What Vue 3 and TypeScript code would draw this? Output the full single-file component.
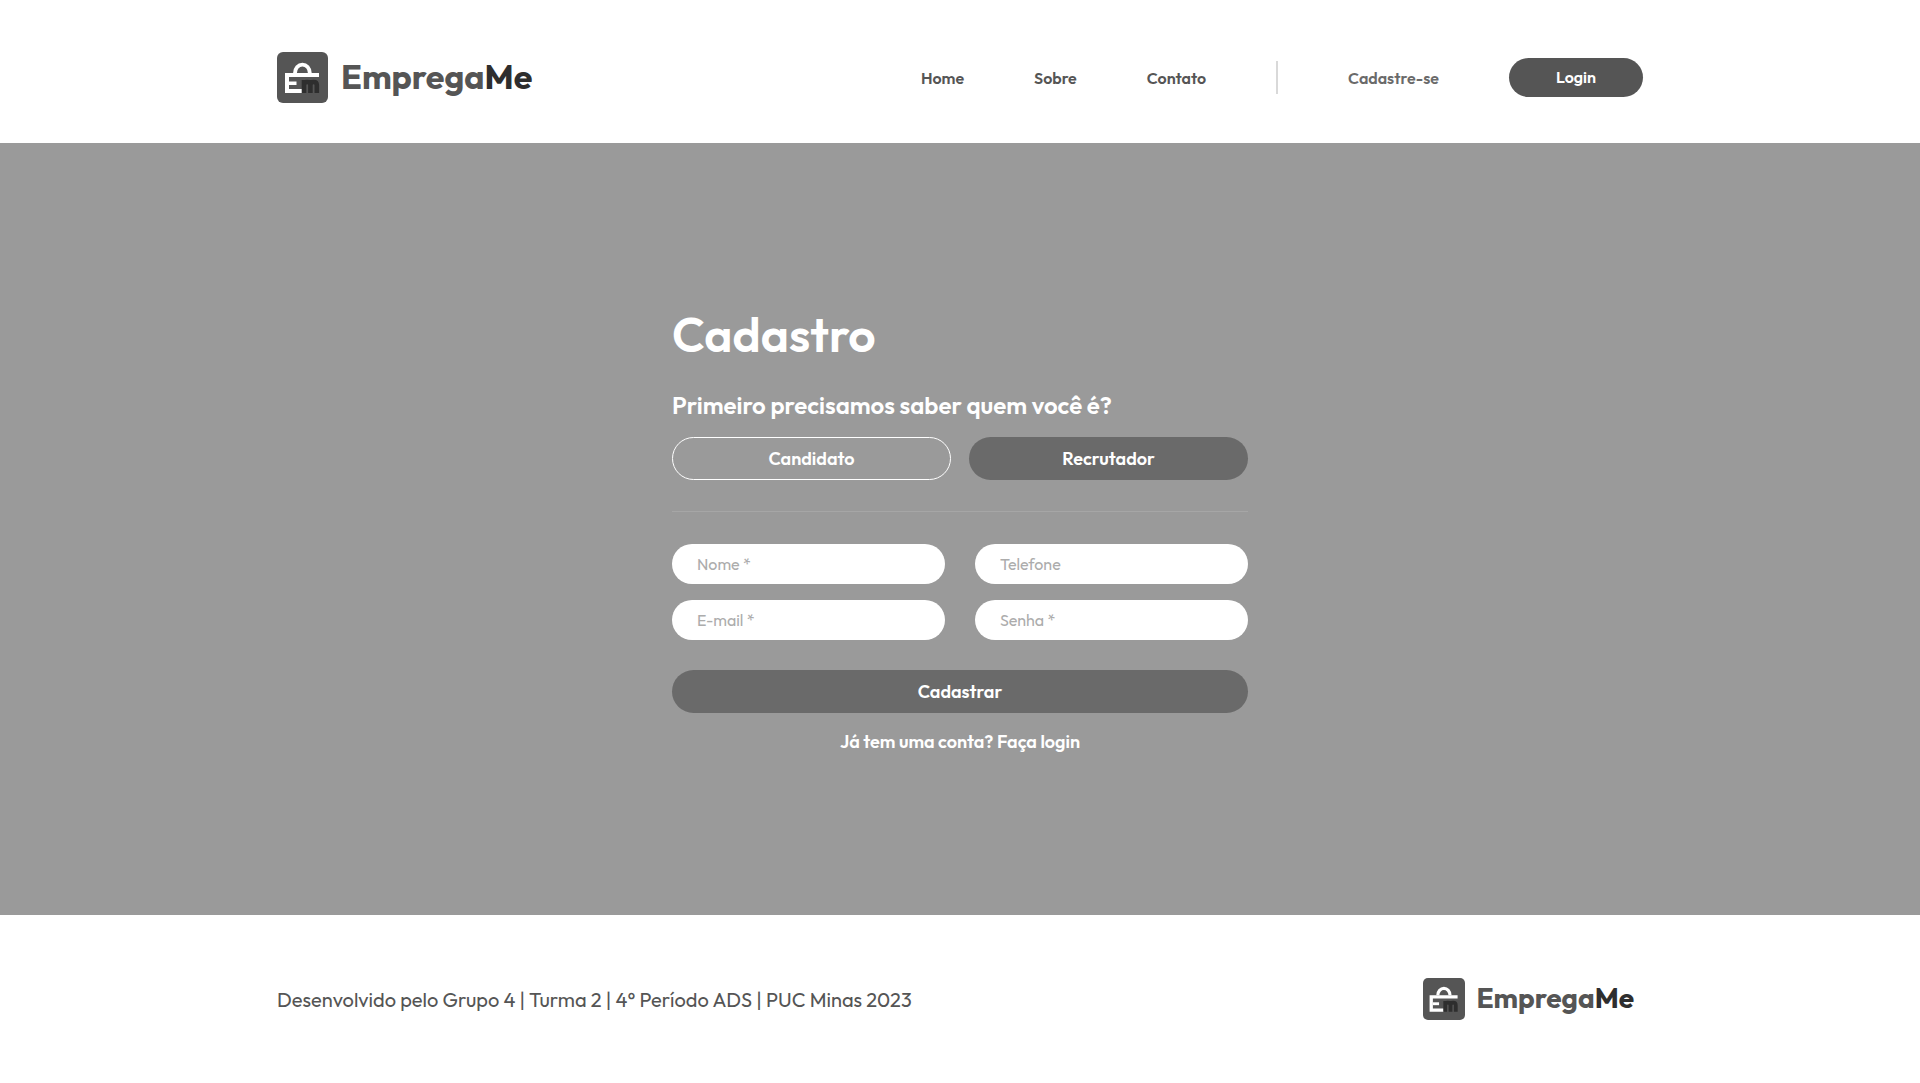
<script setup lang="ts">
import { ref } from 'vue'

type Role = 'candidato' | 'recrutador'

interface Field {
  id: string
  type: string
  placeholder: string
  label: string
}

const navLinks: string[] = ['Home', 'Sobre', 'Contato']

const fields: Field[] = [
  { id: 'nome', type: 'text', placeholder: 'Nome *', label: 'Nome' },
  { id: 'telefone', type: 'tel', placeholder: 'Telefone', label: 'Telefone' },
  { id: 'email', type: 'email', placeholder: 'E-mail *', label: 'E-mail' },
  { id: 'senha', type: 'password', placeholder: 'Senha *', label: 'Senha' },
]

const roles: { id: Role; label: string }[] = [
  { id: 'candidato', label: 'Candidato' },
  { id: 'recrutador', label: 'Recrutador' },
]

const selected = ref<Role>('candidato')
const values = ref<Record<string, string>>({ nome: '', telefone: '', email: '', senha: '' })
</script>

<template>
  <div class="page">
    <header class="header">
      <div class="container">
        <a href="#" class="logo">
          <svg class="mark" viewBox="0 0 51 51" aria-hidden="true">
            <symbol id="brand-mark" viewBox="0 0 51 51">
              <rect width="51" height="51" rx="6" fill="#555" />
              <path d="M18 21a7.4 8.4 0 0 1 14.8 0" fill="none" stroke="#fff" stroke-width="3.8" />
              <path d="M8 21h34v4H12v12h13v4H8z" fill="#fff" />
              <path d="M12 29.5h7.500v3.500H12z" fill="#fff" />
              <path d="M27 41V28M27 33q0-3 3.200-3t3.200 3v8M33.400 33q0-3 3.200-3t3.200 3v8" fill="none" stroke="#2e2e2e" stroke-width="4.6" />
            </symbol>
            <use href="#brand-mark" />
          </svg>
          <span class="word">Emprega<span class="me">Me</span></span>
        </a>
        <nav class="nav">
          <a v-for="link in navLinks" :key="link" href="#">{{ link }}</a>
          <span class="divider"></span>
          <a href="#" class="signup">Cadastre-se</a>
          <button type="button" class="login">Login</button>
        </nav>
      </div>
    </header>

    <main class="main">
      <form class="form" @submit.prevent>
        <h1>Cadastro</h1>
        <h2>Primeiro precisamos saber quem você é?</h2>
        <div class="roles">
          <button
            v-for="role in roles"
            :key="role.id"
            type="button"
            class="pill"
            :class="{ outline: selected === role.id }"
            :aria-pressed="selected === role.id"
            @click="selected = role.id"
          >
            {{ role.label }}
          </button>
        </div>
        <hr />
        <div class="fields">
          <input
            v-for="field in fields"
            :id="field.id"
            :key="field.id"
            v-model="values[field.id]"
            :type="field.type"
            :placeholder="field.placeholder"
            :aria-label="field.label"
          />
        </div>
        <button type="submit" class="pill submit">Cadastrar</button>
        <a href="#" class="have-account">Já tem uma conta? Faça login</a>
      </form>
    </main>

    <footer class="footer">
      <div class="container">
        <p>Desenvolvido pelo Grupo 4 | Turma 2 | 4° Período ADS | PUC Minas 2023</p>
        <a href="#" class="logo small">
          <svg class="mark" viewBox="0 0 51 51" aria-hidden="true">
            <use href="#brand-mark" />
          </svg>
          <span class="word">Emprega<span class="me">Me</span></span>
        </a>
      </div>
    </footer>
  </div>
</template>

<style>
body {
  margin: 0;
}
</style>

<style scoped>
.page {
  display: flex;
  flex-direction: column;
  min-height: 100vh;
  background: #fff;
  color: #555;
  font-family: Outfit, Lato, sans-serif;
}

.page * {
  box-sizing: border-box;
}

a {
  color: inherit;
  text-decoration: none;
}

button,
input {
  border: 0;
  font-family: inherit;
}

button {
  cursor: pointer;
}

.container {
  display: flex;
  align-items: center;
  justify-content: space-between;
  max-width: 1366px;
  margin: 0 auto;
}

.header {
  padding: 52px 24px 40px;
}

.logo {
  display: flex;
  align-items: center;
  gap: 13px;
}

.mark {
  width: 51px;
  height: 51px;
}

.word {
  padding-bottom: 2px;
  font-size: 34px;
  font-weight: 700;
  line-height: 44px;
}

.me {
  color: #2e2e2e;
}

.nav {
  display: flex;
  align-items: center;
  gap: 70px;
  font-size: 16px;
  font-weight: 600;
  line-height: 20px;
}

.divider {
  width: 2px;
  height: 33px;
  background: #d9d9d9;
}

.signup {
  color: #6a6a6a;
}

.login {
  width: 134px;
  height: 39px;
  padding-bottom: 3px;
  border-radius: 20px;
  background: #555;
  color: #fff;
  font-size: 16px;
  font-weight: 600;
  line-height: 20px;
}

.main {
  display: flex;
  flex: 1;
  align-items: center;
  justify-content: center;
  padding: 40px 24px 42px;
  background: #9a9a9a;
  color: #fff;
}

.form {
  display: flex;
  flex-direction: column;
  width: 100%;
  max-width: 576px;
}

h1 {
  margin: 0 0 26px;
  font-size: 48px;
  font-weight: 600;
  line-height: 60px;
}

h2 {
  margin: 0 0 17px;
  font-size: 24px;
  font-weight: 600;
  line-height: 30px;
}

.roles {
  display: grid;
  grid-template-columns: 1fr 1fr;
  gap: 18px;
}

.pill {
  height: 43px;
  border-radius: 22px;
  background: #6a6a6a;
  color: #fff;
  font-size: 18px;
  font-weight: 600;
  line-height: 23px;
}

.pill.outline {
  border: 1px solid #fff;
  background: transparent;
}

hr {
  width: 100%;
  height: 1px;
  margin: 31px 0 32px;
  border: 0;
  background: #a6a6a6;
}

.fields {
  display: grid;
  grid-template-columns: 1fr 1fr;
  gap: 16px 30px;
}

input {
  width: 100%;
  height: 40px;
  padding: 0 25px;
  border-radius: 20px;
  background: #fff;
  color: #555;
  font-size: 16px;
}

input::placeholder {
  color: #acacac;
}

.submit {
  margin-top: 30px;
}

.have-account {
  align-self: center;
  margin-top: 17px;
  font-size: 18px;
  font-weight: 600;
  line-height: 23px;
}

.footer {
  padding: 63px 24px;
}

.footer p {
  margin: 0;
  font-size: 20px;
  line-height: 25px;
}

.small {
  gap: 11px;
  padding-right: 9px;
}

.small .mark {
  width: 42px;
  height: 42px;
}

.small .word {
  font-size: 28px;
  line-height: 36px;
}
</style>
